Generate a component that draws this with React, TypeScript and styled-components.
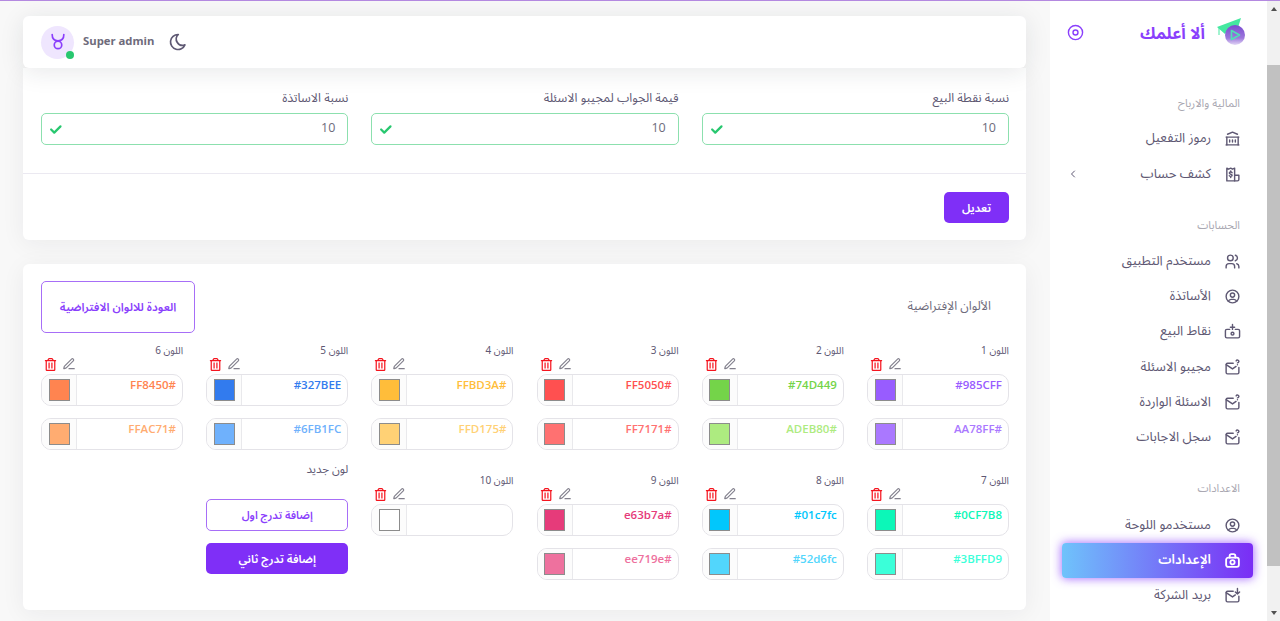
import React from "react";
import styled, { createGlobalStyle } from "styled-components";
import { TbBuildingBank, TbUsers, TbUserCircle, TbChevronLeft, TbMoon, TbCheck } from "react-icons/tb";
import { FaRegTrashAlt } from "react-icons/fa";
import { LuPenLine } from "react-icons/lu";

const Global = createGlobalStyle`
  html, body { margin: 0; height: 100%; overflow: hidden; background: #f8f8f8; }
  body { font-family: "Noto Sans Arabic", "Noto Sans", "DejaVu Sans", sans-serif; color: #6e6b7b; }
  #root { height: 621px; }
  * { box-sizing: border-box; }
`;

const Shell = styled.div`
  height: 621px; display: flex; border-top: 1px solid #b489e0; overflow: hidden;
`;
const Main = styled.main`
  flex: 1; min-width: 0; padding: 15px 24px 0 23px; display: flex; flex-direction: column;
`;
const TopBar = styled.header`
  height: 52px; flex: none; background: #fff; border-radius: 6px; display: flex; align-items: center;
  padding: 0 17px 0 18px; gap: 9px; box-shadow: 0 4px 24px rgba(34,41,47,.1); position: relative; z-index: 2;
`;
const Avatar = styled.div`
  width: 33px; height: 33px; border-radius: 50%; background: #efe6fe; color: #8a3ffc; display: flex;
  align-items: center; justify-content: center; position: relative;
`;
const Dot = styled.span`
  position: absolute; right: 0; bottom: 0; width: 8px; height: 8px; border-radius: 50%; background: #28c76f;
`;
const UserName = styled.span`
  font: 700 11.3px "Open Sans", sans-serif; color: #6e6b7b; padding-bottom: 3px; margin-right: 5px;
`;
const Moon = styled(TbMoon)`
  color: #5e5873;
`;
const Card = styled.section`
  background: #fff; border-radius: 6px; box-shadow: 0 4px 24px rgba(34,41,47,.06);
`;
const RatesCard = styled(Card)`
  height: 172px; flex: none; border-top-left-radius: 0; border-top-right-radius: 0;
`;
const RatesGrid = styled.div`
  direction: rtl; display: grid; grid-template-columns: repeat(3, minmax(0, 1fr)); gap: 23px; padding: 22px 17px 0 18px; height: 106px;
  border-bottom: 1px solid #ebe9f1;
`;
const Field = styled.div`
  display: flex; flex-direction: column; gap: 6px;
`;
const FieldLabel = styled.label`
  font-size: 12.4px; line-height: 17px; color: #5e5873;
`;
const FieldBox = styled.div`
  height: 32px; border: 1px solid #8ce0ae; border-radius: 5px; display: flex; align-items: center;
  justify-content: space-between; padding: 0 12px 3px 6px; font: 400 12.5px "Open Sans", sans-serif; color: #6e6b7b;
  svg { color: #28c76f; margin-top: 3px; }
`;
const RatesFooter = styled.div`
  display: flex; padding: 18px 17px 0 0; justify-content: flex-end;
`;
const FilledButton = styled.button<{ $wide?: boolean }>`
  height: 31px; width: ${(p) => (p.$wide ? "100%" : "65px")}; border: 0; border-radius: 5px; background: #7f2ff7; color: #fff;
  font: 600 11.5px "Noto Sans Arabic", "DejaVu Sans", sans-serif; padding: 0;
`;
const ColorsCard = styled(Card)`
  margin-top: 24px; height: 346px; flex: none; padding: 17px 17px 0 18px; display: flex; flex-direction: column;
`;
const ColorsHeader = styled.div`
  display: flex; justify-content: space-between; align-items: center; direction: ltr; height: 52px; padding-right: 18px;
`;
const ResetButton = styled.button`
  width: 154px; height: 52px; background: #fff; border: 1px solid #a76ef7; border-radius: 5px; color: #8a3ffc;
  font: 600 11.6px "Noto Sans Arabic", "DejaVu Sans", sans-serif; padding: 0;
`;
const ColorsTitle = styled.h2`
  margin: 0 0 2px; font-size: 12.4px; font-weight: 400; color: #6e6b7b;
`;
const ColorsGrid = styled.div`
  direction: rtl; margin-top: 12px; display: grid; grid-template-columns: repeat(6, minmax(0, 1fr)); column-gap: 23.2px; row-gap: 13px;
`;
const ColorCell = styled.div`
  display: flex; flex-direction: column;
`;
const ColorLabel = styled.div`
  font-size: 10px; line-height: 12px; color: #5e5873;
`;
const ToolRow = styled.div`
  height: 17px; flex: none; direction: ltr; display: flex; align-items: center; gap: 5px; padding: 0 0 3px 3px;
`;
const Trash = styled(FaRegTrashAlt)`
  color: #f5141e;
`;
const Pen = styled(LuPenLine)`
  color: #82808d;
`;
const ColorInput = styled.div`
  direction: ltr; height: 32px; flex: none; border: 1px solid #e4e3e8; border-radius: 10px; display: flex; margin-bottom: 12px; overflow: hidden;
`;
const SwatchCell = styled.div`
  flex: none; width: 35px; border-right: 1px solid #e9e9ec; display: flex; align-items: center; justify-content: center; background: #fcfcfc;
`;
const Swatch = styled.span<{ $c: string }>`
  width: 21px; height: 22px; border: 1px solid #8c8c8c; background: ${(p) => p.$c};
`;
const HexText = styled.div<{ $c: string }>`
  flex: 1; direction: rtl; padding-right: 6px; color: ${(p) => p.$c}; font: 600 11.5px/20px "Open Sans", sans-serif;
`;
const NewColor = styled.div`
  display: flex; flex-direction: column; margin-top: -13px;
`;
const NewTitle = styled.div`
  font-size: 11.5px; line-height: 14px; color: #5e5873;
`;
const OutlineButton = styled.button`
  height: 32px; margin: 23px 0 12px; background: #fff; border: 1px solid #a76ef7; border-radius: 5px; color: #8a3ffc;
  font: 600 11px "Noto Sans Arabic", "DejaVu Sans", sans-serif; padding: 0;
`;

const Sidebar = styled.aside`
  width: 217px; flex: none; background: #fff; direction: rtl; display: flex; flex-direction: column; padding: 0 14px 0 12px;
`;
const Brand = styled.div`
  height: 62px; display: flex; align-items: center; justify-content: space-between; padding: 0 4px 0 5px; flex: none;
`;
const BrandName = styled.span`
  font-size: 16.5px; font-weight: 700; color: #8a3ffc; margin-right: 10px; flex: 1; padding-top: 2px;
`;
const GroupTitle = styled.div<{ $top: number }>`
  margin-top: ${(p) => p.$top}px; height: 14px; line-height: 14px; padding-right: 13px; font-size: 11.2px; color: #aaa8b2; flex: none;
`;
const NavItem = styled.div<{ $active?: boolean }>`
  height: 35px; flex: none; margin-top: 0.3px; display: flex; align-items: center; gap: 13px; padding: 0 12px 0 5px; border-radius: 4px; font-size: 13.2px;
  color: ${(p) => (p.$active ? "#fff" : "#5e5873")};
  background: ${(p) => (p.$active ? "linear-gradient(to left, #7a2df5, #6fc3fb)" : "transparent")};
  box-shadow: ${(p) => (p.$active ? "0 0 10px 1px rgba(138,63,252,.7)" : "none")};
  font-weight: ${(p) => (p.$active ? 600 : 400)};
`;
const NavLabel = styled.span`
  flex: 1; padding-bottom: 1px;
`;
const NavSpacer = styled.div<{ $h: number }>`
  height: ${(p) => p.$h}px; flex: none;
`;
const Track = styled.div`
  width: 13px; flex: none; background: #f1f1f1; display: flex; flex-direction: column; align-items: center;
`;
const ArrowUp = styled.span`
  margin-top: 6px; border: 3.5px solid transparent; border-top-width: 0; border-bottom: 4px solid #505050;
`;
const Thumb = styled.div`
  width: 100%; height: 501px; margin-top: 54px; background: #c1c1c1;
`;
const ArrowDown = styled.span`
  margin-top: 45px; border: 3.5px solid transparent; border-bottom-width: 0; border-top: 4px solid #505050;
`;

type Color = { label: string; a?: string; b?: string };
const colors: Color[] = [
  { label: "اللون 1", a: "#985CFF", b: "#AA78FF" },
  { label: "اللون 2", a: "#74D449", b: "#ADEB80" },
  { label: "اللون 3", a: "#FF5050", b: "#FF7171" },
  { label: "اللون 4", a: "#FFBD3A", b: "#FFD175" },
  { label: "اللون 5", a: "#327BEE", b: "#6FB1FC" },
  { label: "اللون 6", a: "#FF8450", b: "#FFAC71" },
  { label: "اللون 7", a: "#0CF7B8", b: "#3BFFD9" },
  { label: "اللون 8", a: "#01c7fc", b: "#52d6fc" },
  { label: "اللون 9", a: "#e63b7a", b: "#ee719e" },
  { label: "اللون 10" },
];

const ColorField = ({ c }: { c?: string }) => (
  <ColorInput>
    <SwatchCell><Swatch $c={c ?? "#fff"} /></SwatchCell>
    <HexText $c={c ?? "#000"}>{c ?? ""}</HexText>
  </ColorInput>
);

const Tools = () => (
  <ToolRow><Trash size={13} /><Pen size={14} /></ToolRow>
);

const Logo = () => (
  <svg width="34" height="32" viewBox="0 0 34 32">
    <defs>
      <linearGradient id="logoFill" x1="0" y1="0" x2="0" y2="1">
        <stop offset="0" stopColor="#7a4bd0" />
        <stop offset="0.65" stopColor="#9d78dc" />
        <stop offset="1" stopColor="#e3d8f6" />
      </linearGradient>
    </defs>
    <path d="M2 11 L26 2 L23.5 10 L17 11 L10 18 Z" fill="#45e8a0" />
    <path d="M4 11 V19" stroke="#45e8a0" strokeWidth="1" />
    <circle cx="20" cy="19" r="10" fill="url(#logoFill)" />
    <path d="M16.5 14.5 L24.5 19 L16.5 23.5 Z" fill="none" stroke="#4fe0b5" strokeWidth="1.6" strokeLinejoin="round" />
  </svg>
);

const IconSvg = styled.svg.attrs({ viewBox: "0 0 24 24", fill: "none", stroke: "currentColor", strokeWidth: 2, strokeLinecap: "round", strokeLinejoin: "round" })<{ $s?: number; $c?: string; $w?: number }>`
  width: ${(p) => p.$s ?? 17}px; height: ${(p) => p.$s ?? 17}px; flex: none;
  ${(p) => (p.$c ? `color: ${p.$c};` : "")}
  ${(p) => (p.$w ? `stroke-width: ${p.$w};` : "")}
`;
type IP = { size?: number };
const ToggleIcon = () => (
  <IconSvg $s={17} $c="#8a3ffc"><circle cx="12" cy="12" r="10" /><circle cx="12" cy="12" r="3.5" /></IconSvg>
);
const TaurusIcon = () => (
  <IconSvg $s={20}><path d="M5 3c0 5 3 7.5 7 7.5S19 8 19 3" /><circle cx="12" cy="15.5" r="4.5" /></IconSvg>
);
const StatementIcon = ({ size }: IP) => (
  <IconSvg $s={size}>
    <path d="M15 21H4V3l2.5 1.500L9.500 3l2.500 1.500L15 3v18z" />
    <path d="M15 13h6v6a2 2 0 0 1-2 2h-4" />
    <path d="M11.500 9.500c-.4-.7-1-1-2-1-1.200 0-2 .6-2 1.500 0 2.200 4 1 4 3.200 0 .9-.8 1.500-2 1.500-1 0-1.700-.4-2-1M9.500 7v1.500M9.500 14.700v1.500" />
  </IconSvg>
);
const SalesIcon = ({ size }: IP) => (
  <IconSvg $s={size}>
    <path d="M8 9H4a2 2 0 0 0-2 2v8a2 2 0 0 0 2 2h16a2 2 0 0 0 2-2v-8a2 2 0 0 0-2-2h-4" />
    <circle cx="12" cy="15" r="2" />
    <path d="M12 2v7M9 6h6" />
  </IconSvg>
);
const MailAskIcon = ({ size }: IP) => (
  <IconSvg $s={size}>
    <path d="M13 6H5a2 2 0 0 0-2 2v11a2 2 0 0 0 2 2h14a2 2 0 0 0 2-2v-7" />
    <path d="M3 8l9 6 5-3.500" />
    <path d="M19 8v.01M19 5.500a2 2 0 1 0-1.800-2.900" />
  </IconSvg>
);
const MailDownIcon = ({ size }: IP) => (
  <IconSvg $s={size}>
    <path d="M13 6H5a2 2 0 0 0-2 2v11a2 2 0 0 0 2 2h14a2 2 0 0 0 2-2v-6" />
    <path d="M3 8l9 6 4-2.800" />
    <path d="M19 2v8M16 7l3 3 3-3" />
  </IconSvg>
);
const SettingsIcon = ({ size }: IP) => (
  <IconSvg $s={size} $w={2.6}>
    <path d="M8 8V5.500A2.500 2.500 0 0 1 10.500 3h3A2.500 2.500 0 0 1 16 5.500V8" />
    <rect x="3" y="8" width="18" height="13" rx="3" />
    <circle cx="12" cy="14.500" r="3" />
  </IconSvg>
);

const nav1: [string, React.ElementType][] = [["رموز التفعيل", TbBuildingBank], ["كشف حساب", StatementIcon]];
const nav2: [string, React.ElementType][] = [
  ["مستخدم التطبيق", TbUsers], ["الأساتذة", TbUserCircle], ["نقاط البيع", SalesIcon],
  ["مجيبو الاسئلة", MailAskIcon], ["الاسئلة الواردة", MailAskIcon], ["سجل الاجابات", MailAskIcon],
];

function NavGroup({ items, first }: { items: [string, React.ElementType][]; first: number }) {
  return (
    <>
      <NavSpacer $h={first} />
      {items.map(([label, Icon]) => (
        <NavItem key={label}>
          <Icon size={17} />
          <NavLabel>{label}</NavLabel>
          {label === "كشف حساب" && <TbChevronLeft size={12} />}
        </NavItem>
      ))}
    </>
  );
}

export default function App() {
  return (
    <Shell>
      <Global />
      <Main>
        <TopBar>
          <Avatar><TaurusIcon /><Dot /></Avatar>
          <UserName>Super admin</UserName>
          <Moon size={20} />
        </TopBar>
        <RatesCard>
          <RatesGrid>
            {["نسبة نقطة البيع", "قيمة الجواب لمجيبو الاسئلة", "نسبة الاساتذة"].map((l) => (
              <Field key={l}>
                <FieldLabel>{l}</FieldLabel>
                <FieldBox>10<TbCheck size={15} strokeWidth={3.5} /></FieldBox>
              </Field>
            ))}
          </RatesGrid>
          <RatesFooter><FilledButton>تعديل</FilledButton></RatesFooter>
        </RatesCard>
        <ColorsCard>
          <ColorsHeader>
            <ResetButton>العودة للالوان الافتراضية</ResetButton>
            <ColorsTitle>الألوان الإفتراضية</ColorsTitle>
          </ColorsHeader>
          <ColorsGrid>
            {colors.slice(0, 9).map((c) => (
              <ColorCell key={c.label}>
                <ColorLabel>{c.label}</ColorLabel>
                <Tools />
                <ColorField c={c.a} />
                <ColorField c={c.b} />
              </ColorCell>
            ))}
            <ColorCell>
              <ColorLabel>{colors[9].label}</ColorLabel>
              <Tools />
              <ColorField />
            </ColorCell>
            <NewColor>
              <NewTitle>لون جديد</NewTitle>
              <OutlineButton>إضافة تدرج اول</OutlineButton>
              <FilledButton $wide>إضافة تدرج ثاني</FilledButton>
            </NewColor>
          </ColorsGrid>
        </ColorsCard>
      </Main>
      <Sidebar>
        <Brand>
          <Logo />
          <BrandName>ألا أعلمك</BrandName>
          <ToggleIcon />
        </Brand>
        <GroupTitle $top={34}>المالية والارباح</GroupTitle>
        <NavGroup items={nav1} first={10} />
        <GroupTitle $top={27}>الحسابات</GroupTitle>
        <NavGroup items={nav2} first={11} />
        <GroupTitle $top={27}>الاعدادات</GroupTitle>
        <NavGroup items={[["مستخدمو اللوحة", TbUserCircle]]} first={11} />
        <NavItem $active><SettingsIcon size={17} /><NavLabel>الإعدادات</NavLabel></NavItem>
        <NavItem><MailDownIcon size={17} /><NavLabel>بريد الشركة</NavLabel></NavItem>
      </Sidebar>
      <Track><ArrowUp /><Thumb /><ArrowDown /></Track>
    </Shell>
  );
}
